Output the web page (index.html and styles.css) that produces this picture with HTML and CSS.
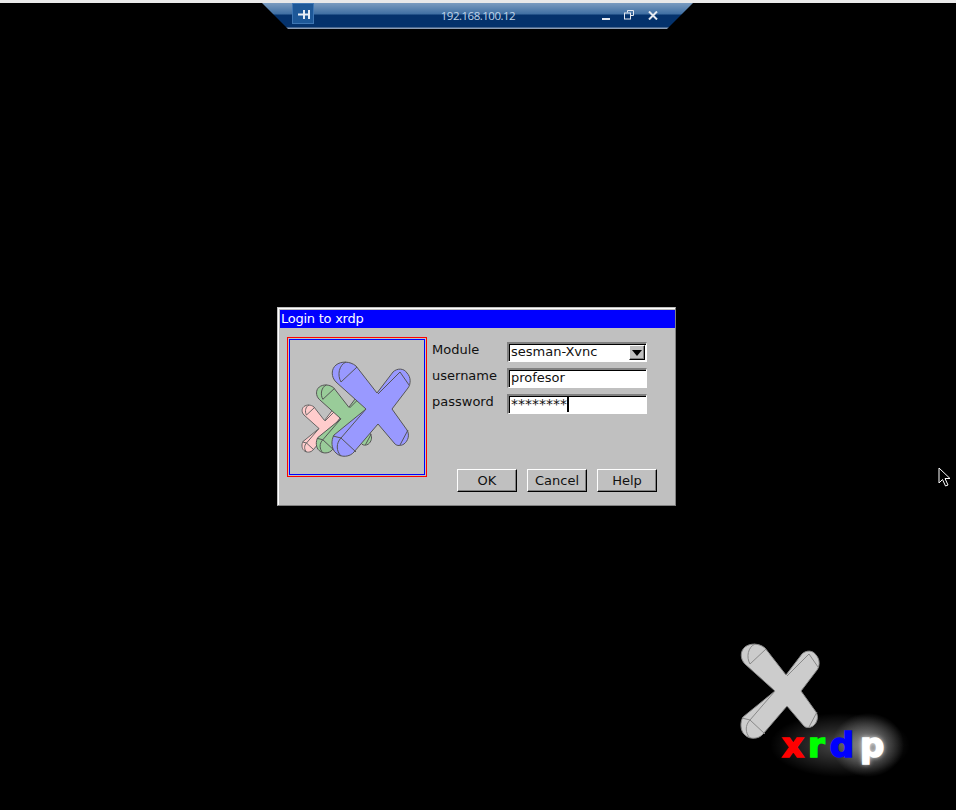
FILE: index.html
```html
<!DOCTYPE html>
<html lang="en">
<head>
  <meta charset="UTF-8" />
  <title>Login to xrdp</title>
  <link rel="stylesheet" href="styles.css">
</head>
<body>

  <!-- shape of the X, used by both logos -->
  <svg class="defs" width="0" height="0">
    <symbol id="x-shape" viewBox="0 0 90 105" overflow="visible">
      <path class="x-body" d="M51 35 L67 14 C71 10 78 10 81 15 C85 19 85 26 82 30 L66 51 L81 72 C84 77 82 83 78 86 C75 88 71 88 69 86 L52 66 L28 94 C24 99 15 100 10 95 C5 91 5 82 8 77 L40 51 L10 24 C5 19 5 11 10 7 C15 3 24 3 30 8 Z" />
      <path class="x-line" d="M31 9 L15 24 M20 4 C13 7 11 17 15 24 M52 36 L74 14 L83 27 M40 51 L15 80 L30 94 M7 78 L15 80 M15 80 C10 85 10 93 15 98 M82 72 L74 87" />
    </symbol>
  </svg>

  <div class="top-line"></div>

  <!-- remote desktop connection bar -->
  <div class="conn-bar">
    <div class="pin-btn">
      <svg width="12" height="9" viewBox="0 0 12 9"><path d="M0 3.500h5V0h2v3.500h3V0h2v9h-2V5.500H7V9H5V5.500H0z" fill="#e8eef5" /></svg>
    </div>
    <div class="conn-title">192.168.100.12</div>
    <div class="conn-icons">
      <svg width="8" height="10" viewBox="0 0 8 10"><rect x="0" y="8" width="8" height="2" fill="#e4e9f0" /></svg>
      <svg width="10" height="10" viewBox="0 0 10 10" fill="none" stroke="#e4e9f0"><path d="M3.500 2.500V.5h6v5H7" /><rect x=".5" y="3" width="6" height="6" /></svg>
      <svg width="10" height="9" viewBox="0 0 10 9" fill="none" stroke="#e4e9f0" stroke-width="2"><path d="M1 .5l8 8M9 .5l-8 8" /></svg>
    </div>
  </div>

  <!-- login window -->
  <div class="dialog">
    <div class="dialog-title">Login to xrdp</div>
    <div class="dialog-body">
      <div class="logo-frame">
        <div class="logo-inner">
          <svg class="logo-art" width="134" height="134" viewBox="0 0 134 134">
            <use class="x-pink" href="#x-shape" x="9" y="63" width="45" height="52.5" />
            <use class="x-green" href="#x-shape" x="22" y="42" width="65" height="75.8" />
            <use class="x-blue" href="#x-shape" x="36" y="18" width="90" height="105" />
          </svg>
        </div>
      </div>
      <div class="form-side">
        <div class="form-grid">
          <label>Module</label>
          <div class="field">
            <span>sesman-Xvnc</span>
            <span class="combo-btn"><span class="combo-arrow"></span></span>
          </div>
          <label>username</label>
          <div class="field"><span>profesor</span></div>
          <label>password</label>
          <div class="field"><span class="stars">********</span><span class="caret"></span></div>
        </div>
        <div class="buttons">
          <button>OK</button>
          <button>Cancel</button>
          <button>Help</button>
        </div>
      </div>
    </div>
  </div>

  <!-- xrdp logo in the corner -->
  <div class="corner-glow"></div>
  <svg class="corner-x" width="90" height="105"><use class="x-gray" href="#x-shape" width="90" height="105" /></svg>
  <div class="corner-text"><span class="c-red">x</span><span class="c-green">r</span><span class="c-blue">d</span><span class="c-white">p</span></div>

  <!-- mouse pointer -->
  <svg class="pointer" width="14" height="21" viewBox="0 0 14 21">
    <path d="M1 1v15l3.500-3.500 3 6.500 2.500-1-3-6.500h5z" fill="#000" stroke="#fff" stroke-width="1" />
  </svg>

</body>
</html>
```

FILE: styles.css
```css
body {
  margin: 0;
  height: 810px;
  background: #000;
  font-family: "DejaVu Sans", sans-serif;
  font-size: 13px;
  color: #111;
  overflow: hidden;
}

.defs {
  position: absolute;
}

/* stroke comes from the <use> element, it inherits into the symbol */
.x-body {
  fill: currentColor;
  vector-effect: non-scaling-stroke;
}

.x-line {
  fill: none;
  vector-effect: non-scaling-stroke;
}

.x-pink { color: #ffcccc; stroke: #666; }
.x-green { color: #99cc99; stroke: #555; }
.x-blue { color: #9999ff; stroke: #555; }
.x-gray { color: #cccccc; stroke: #888; }

.top-line {
  height: 3px;
  background: #e9e9e9;
}

/* connection bar */
.conn-bar {
  position: absolute;
  left: 262px;
  top: 3px;
  width: 431px;
  height: 26px;
  box-sizing: border-box;
  display: flex;
  align-items: flex-start;
  clip-path: polygon(0 0, 100% 0, 405px 100%, 26px 100%);
  background: linear-gradient(#7a9bbf 0, #3f6fa3 11px, #04326c 12px, #04326c 24px, #8b9db5 25px);
}

.pin-btn {
  margin-left: 30px;
  width: 22px;
  height: 21px;
  box-sizing: border-box;
  padding: 1px 0 0 2px;
  border: 1px solid #3e76b3;
  background: #1d5898;
  display: flex;
  align-items: center;
  justify-content: center;
}

.conn-title {
  width: 170px;
  margin-left: 79px;
  text-align: center;
  font-family: "Open Sans", sans-serif;
  font-size: 11.5px;
  letter-spacing: -0.5px;
  line-height: 25px;
  color: #c0d6ea;
}

.conn-icons {
  display: flex;
  gap: 14px;
  margin-left: 39px;
  margin-top: 7px;
  align-items: center;
}

/* dialog */
.dialog {
  position: absolute;
  left: 277px;
  top: 307px;
  width: 399px;
  height: 199px;
  box-sizing: border-box;
  padding: 2px 0 0 2px;
  background: #c0c0c0;
  border: 1px solid #c0c0c0;
  border-right-color: #808080;
  border-bottom-color: #808080;
  box-shadow: inset 1px 1px 0 #fff;
  display: flex;
  flex-direction: column;
}

.dialog-title {
  height: 18px;
  line-height: 18px;
  padding-left: 1px;
  letter-spacing: -0.25px;
  background: #0000ff;
  color: #fff;
}

.dialog-body {
  flex: 1;
  display: flex;
  gap: 5px;
  padding: 9px 0 13px 7px;
}

.logo-frame {
  width: 140px;
  height: 140px;
  box-sizing: border-box;
  border: 1px solid #ff0000;
  padding: 1px;
}

.logo-inner {
  height: 100%;
  box-sizing: border-box;
  border: 1px solid #0000ff;
}

.logo-art {
  display: block;
}

.form-side {
  flex: 1;
  display: flex;
  flex-direction: column;
  justify-content: space-between;
  padding-top: 5px;
}

.form-grid {
  display: grid;
  grid-template-columns: 75px 140px;
  grid-auto-rows: 20px;
  row-gap: 6px;
}

.form-grid label {
  line-height: 16px;
}

.field {
  box-sizing: border-box;
  position: relative;
  display: flex;
  align-items: center;
  padding: 0 0 1px 2px;
  background: #fff;
  border: 1px solid #fff;
  border-top: 2px solid #808080;
  border-left: 2px solid #808080;
  box-shadow: inset 1px 1px 0 #000;
  line-height: 16px;
}

.stars {
  font-size: 14px;
}

.caret {
  width: 2px;
  height: 15px;
  background: #000;
}

.combo-btn {
  position: absolute;
  right: 1px;
  top: 1px;
  width: 16px;
  height: 15px;
  box-sizing: border-box;
  background: #c0c0c0;
  border: 1px solid #000;
  border-top-color: #fff;
  border-left-color: #fff;
  box-shadow: inset -1px -1px 0 #808080;
  display: flex;
  align-items: center;
  justify-content: center;
}

.combo-arrow {
  width: 0;
  height: 0;
  border-left: 5px solid transparent;
  border-right: 5px solid transparent;
  border-top: 6px solid #000;
}

.buttons {
  display: flex;
  gap: 10px;
  margin-left: 25px;
}

.buttons button {
  width: 60px;
  height: 23px;
  padding: 0;
  font-family: inherit;
  font-size: 13px;
  color: #111;
  background: #c0c0c0;
  border: 1px solid #000;
  border-top-color: #fff;
  border-left-color: #fff;
  box-shadow: inset -1px -1px 0 #808080;
}

/* corner logo */
.corner-x {
  position: absolute;
  left: 735px;
  top: 640px;
}

.corner-glow {
  position: absolute;
  left: 760px;
  top: 695px;
  width: 170px;
  height: 100px;
  background:
    radial-gradient(ellipse 36px 32px at 108px 50px, rgba(255, 255, 255, 0.5), rgba(255, 255, 255, 0)),
    radial-gradient(ellipse 70px 32px at 80px 50px, rgba(255, 255, 255, 0.28), rgba(255, 255, 255, 0));
}

.corner-text {
  position: absolute;
  left: 782px;
  top: 728px;
  display: flex;
  font-weight: bold;
  font-size: 34px;
  line-height: 1;
  -webkit-text-stroke-width: 1.5px;
}

.c-red { color: #ff0000; }
.c-green { color: #00ff00; margin-left: 4px; }
.c-blue { color: #0000ff; margin-left: 5px; }
.c-white { color: #ffffff; margin-left: 6px; text-shadow: 0 0 5px #fff; }

.pointer {
  position: absolute;
  left: 938px;
  top: 467px;
}
```
